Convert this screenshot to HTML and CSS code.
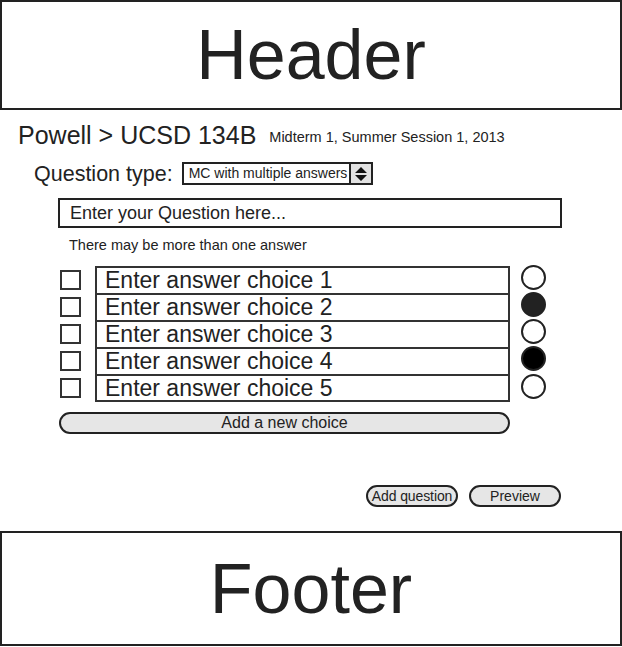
FILE: index.html
```html
<!DOCTYPE html>
<html>
<head>
<meta charset="utf-8">
<title>Question editor</title>
<link rel="stylesheet" href="styles.css">
</head>
<body>
<header class="banner">Header</header>
<main class="editor">
  <div class="crumbs">
    <span class="crumb-path">Powell &gt; UCSD 134B</span>
    <span class="crumb-meta">Midterm 1, Summer Session 1, 2013</span>
  </div>
  <div class="type-row">
    <span class="type-label">Question type:</span>
    <div class="select">
      <span class="select-value">MC with multiple answers</span>
      <span class="select-spin">
        <svg width="14" height="16" viewBox="0 0 14 16"><path d="M7 1 L13 7 H1 Z M1 9 H13 L7 15 Z" fill="#111"/></svg>
      </span>
    </div>
  </div>
  <div class="question-box">Enter your Question here...</div>
  <p class="hint">There may be more than one answer</p>
  <div class="answers">
    <div class="answer"><span class="check"></span><div class="choice">Enter answer choice 1</div><span class="radio"></span></div>
    <div class="answer"><span class="check"></span><div class="choice">Enter answer choice 2</div><span class="radio radio-dark"></span></div>
    <div class="answer"><span class="check"></span><div class="choice">Enter answer choice 3</div><span class="radio"></span></div>
    <div class="answer"><span class="check"></span><div class="choice">Enter answer choice 4</div><span class="radio radio-black"></span></div>
    <div class="answer answer-last"><span class="check"></span><div class="choice">Enter answer choice 5</div><span class="radio"></span></div>
  </div>
  <div class="add-choice">Add a new choice</div>
  <div class="actions">
    <span class="pill pill-add">Add question</span>
    <span class="pill">Preview</span>
  </div>
</main>
<footer class="banner footer">Footer</footer>
</body>
</html>
```
FILE: styles.css
```css
* { box-sizing: border-box; }
html, body { margin: 0; padding: 0; }
body {
  width: 622px;
  font-family: "Liberation Sans", Arial, sans-serif;
  color: #222;
  background: #fff;
}
.banner {
  height: 110px;
  border: 2px solid #222;
  display: flex;
  align-items: center;
  justify-content: center;
  font-size: 70px;
  line-height: 1;
}
.footer {
  height: 115px;
  margin-top: 24px;
}
.editor {
  display: flex;
  flex-direction: column;
  align-items: flex-start;
}
.crumbs {
  margin: 11px 0 0 18px;
  display: flex;
  align-items: baseline;
  gap: 13px;
  height: 28px;
}
.crumb-path { font-size: 25px; line-height: 28px; }
.crumb-meta { font-size: 14.5px; line-height: 16px; position: relative; top: -2px; }
.type-row {
  margin: 13px 0 0 34px;
  display: flex;
  align-items: center;
  gap: 9px;
  height: 23px;
}
.type-label { font-size: 21.5px; line-height: 24px; }
.select {
  width: 191px;
  height: 23px;
  border: 2px solid #222;
  display: flex;
}
.select-value {
  flex: 1;
  font-size: 14px;
  line-height: 19px;
  padding-left: 5px;
  white-space: nowrap;
}
.select-spin {
  width: 22px;
  flex: none;
  background: #e2e2e2;
  border-left: 2px solid #222;
  display: flex;
  align-items: center;
  justify-content: center;
}
.question-box {
  margin: 13px 0 0 58px;
  width: 504px;
  height: 30px;
  border: 2px solid #222;
  font-size: 18px;
  line-height: 26px;
  padding-left: 10px;
}
.hint {
  margin: 9px 0 0 69px;
  font-size: 14.5px;
  line-height: 16px;
}
.answers {
  margin: 13px 0 0 60px;
  display: flex;
  flex-direction: column;
}
.answer {
  display: flex;
  align-items: center;
  height: 27px;
}
.answer-last { height: 28px; }
.check {
  width: 21px;
  height: 20px;
  border: 2px solid #333;
  margin-right: 14px;
}
.choice {
  width: 415px;
  height: 27px;
  border: 2px solid #333;
  border-bottom: none;
  font-size: 23px;
  line-height: 25px;
  padding-left: 8px;
  white-space: nowrap;
  align-self: flex-start;
}
.answer-last .choice {
  height: 28px;
  border-bottom: 2px solid #333;
  line-height: 24px;
}
.radio {
  width: 25px;
  height: 25px;
  border: 2px solid #222;
  border-radius: 50%;
  margin-left: 11px;
  background: #fff;
  position: relative;
  top: -2px;
}
.radio-dark { background: #222; }
.radio-black { background: #000; }
.add-choice {
  margin: 10px 0 0 59px;
  width: 451px;
  height: 22px;
  border: 2px solid #222;
  border-radius: 11px;
  background: #e6e6e6;
  font-size: 16px;
  line-height: 18px;
  text-align: center;
}
.actions {
  margin: 51px 0 0 366px;
  display: flex;
  gap: 11px;
}
.pill {
  width: 92px;
  height: 22px;
  border: 2px solid #222;
  border-radius: 11px;
  background: #e6e6e6;
  font-size: 14px;
  line-height: 18px;
  text-align: center;
  white-space: nowrap;
}
.pill-add { letter-spacing: -0.1px; }
```
